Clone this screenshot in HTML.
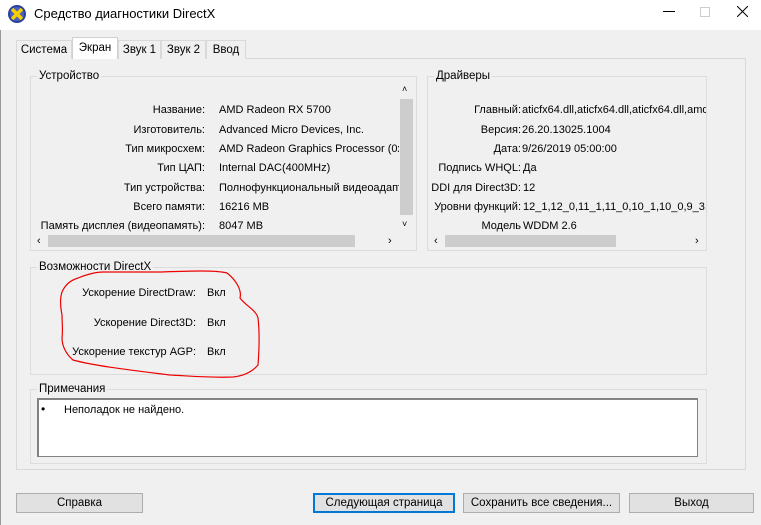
<!DOCTYPE html>
<html><head><meta charset="utf-8"><style>
*{box-sizing:border-box;margin:0;padding:0}
body{width:761px;height:525px;overflow:hidden;background:#f0f0f0;font-family:"Liberation Sans","DejaVu Sans",sans-serif;font-size:11px;color:#000;position:relative}
.a{position:absolute}
.title{left:0;top:0;width:761px;height:30px;background:#fff}
.tab{position:absolute;height:19px;border:1px solid #d9d9d9;border-bottom:none;background:#f0f0f0;text-align:center;line-height:18px;font-size:11.5px}
.panel{left:16px;top:58px;width:730px;height:412px;border:1px solid #d9d9d9;background:#f0f0f0}
.grp{position:absolute;border:1px solid #dcdcdc}
.lbl{position:absolute;background:#f0f0f0;padding:0 2px;top:-7px;left:6px;line-height:13px;font-size:11.5px}
.row{position:absolute;white-space:nowrap;line-height:14px}
.r{text-align:right}
.btn{position:absolute;top:493px;height:20px;border:1px solid #adadad;background:#e1e1e1;text-align:center;line-height:18px;font-size:11.5px}
</style></head><body>
<div class="a title"></div>
<div class="a" style="left:0;top:30px;width:1px;height:495px;background:#999"></div>
<svg class="a" style="left:7px;top:4px" width="20" height="20" viewBox="0 0 20 20"><circle cx="10" cy="10" r="9" fill="#2a3f9a"/><circle cx="10" cy="10" r="7" fill="#4a5fc0"/><path d="M5 5L15 15M15 5L5 15" stroke="#f5d000" stroke-width="3.5"/></svg>
<div class="a" style="left:34px;top:6px;font-size:13px;line-height:16px">Средство диагностики DirectX</div>
<div class="a" style="left:663px;top:11px;width:12px;height:1px;background:#000"></div>
<div class="a" style="left:700px;top:7px;width:10px;height:10px;border:1px solid #ccc"></div>
<svg class="a" style="left:737px;top:6px" width="11" height="11"><path d="M0 0L11 11M11 0L0 11" stroke="#000" stroke-width="1"/></svg>

<div class="a panel"></div>
<div class="tab" style="left:16px;top:40px;width:56px">Система</div>
<div class="tab" style="left:72px;top:37px;width:46px;height:22px;background:#fff;border-color:#d0d0d0;line-height:20px">Экран</div>
<div class="tab" style="left:118px;top:40px;width:43px">Звук 1</div>
<div class="tab" style="left:161px;top:40px;width:45px">Звук 2</div>
<div class="tab" style="left:206px;top:40px;width:40px">Ввод</div>

<div class="grp" style="left:30px;top:76px;width:387px;height:175px"><span class="lbl">Устройство</span></div>
<div class="a" style="left:33px;top:83px;width:366px;height:149px;overflow:hidden">
<div class="row r" style="left:0;width:172px;top:20px">Название:</div><div class="row" style="left:186px;top:20px">AMD Radeon RX 5700</div>
<div class="row r" style="left:0;width:172px;top:40px">Изготовитель:</div><div class="row" style="left:186px;top:40px">Advanced Micro Devices, Inc.</div>
<div class="row r" style="left:0;width:172px;top:59px">Тип микросхем:</div><div class="row" style="left:186px;top:59px">AMD Radeon Graphics Processor (0x731F)</div>
<div class="row r" style="left:0;width:172px;top:78px">Тип ЦАП:</div><div class="row" style="left:186px;top:78px">Internal DAC(400MHz)</div>
<div class="row r" style="left:0;width:172px;top:98px">Тип устройства:</div><div class="row" style="left:186px;top:98px">Полнофункциональный видеоадаптер</div>
<div class="row r" style="left:0;width:172px;top:117px">Всего памяти:</div><div class="row" style="left:186px;top:117px">16216 MB</div>
<div class="row r" style="left:0;width:172px;top:136px">Память дисплея (видеопамять):</div><div class="row" style="left:186px;top:136px">8047 MB</div>
</div>
<div class="a" style="left:399px;top:82px;width:17px;height:150px;background:#f0f0f0"></div>
<div class="a" style="left:400px;top:99px;width:13px;height:116px;background:#cdcdcd"></div>
<div class="a" style="left:402px;top:84px;font-size:9px">˄</div>
<div class="a" style="left:402px;top:219px;font-size:9px">˅</div>
<div class="a" style="left:33px;top:232px;width:366px;height:17px;background:#f0f0f0"></div>
<div class="a" style="left:48px;top:235px;width:307px;height:12px;background:#cdcdcd"></div>
<div class="a" style="left:37px;top:235px;font-size:11px">‹</div>
<div class="a" style="left:388px;top:235px;font-size:11px">›</div>

<div class="grp" style="left:427px;top:76px;width:280px;height:175px"><span class="lbl">Драйверы</span></div>
<div class="a" style="left:430px;top:101px;width:276px;height:131px;overflow:hidden">
<div class="row r" style="left:0;width:91px;top:2px">Главный:</div><div class="row" style="left:92px;top:2px">aticfx64.dll,aticfx64.dll,aticfx64.dll,amdxc64.dll</div>
<div class="row r" style="left:0;width:91px;top:22px">Версия:</div><div class="row" style="left:92px;top:22px">26.20.13025.1004</div>
<div class="row r" style="left:0;width:91px;top:41px">Дата:</div><div class="row" style="left:92px;top:41px">9/26/2019 05:00:00</div>
<div class="row r" style="left:0;width:91px;top:60px">Подпись WHQL:</div><div class="row" style="left:93px;top:60px">Да</div>
<div class="row r" style="left:-4px;width:95px;top:80px">DDI для Direct3D:</div><div class="row" style="left:93px;top:80px">12</div>
<div class="row r" style="left:-4px;width:95px;top:99px">Уровни функций:</div><div class="row" style="left:93px;top:99px">12_1,12_0,11_1,11_0,10_1,10_0,9_3,9_2</div>
<div class="row r" style="left:0;width:91px;top:118px">Модель</div><div class="row" style="left:93px;top:118px">WDDM 2.6</div>
</div>
<div class="a" style="left:430px;top:232px;width:276px;height:17px;background:#f0f0f0"></div>
<div class="a" style="left:445px;top:235px;width:171px;height:12px;background:#cdcdcd"></div>
<div class="a" style="left:434px;top:235px;font-size:11px">‹</div>
<div class="a" style="left:695px;top:235px;font-size:11px">›</div>

<div class="grp" style="left:30px;top:267px;width:677px;height:108px"><span class="lbl">Возможности DirectX</span></div>
<div class="row r" style="left:40px;width:156px;top:286px">Ускорение DirectDraw:</div><div class="row" style="left:207px;top:286px">Вкл</div>
<div class="row r" style="left:40px;width:156px;top:316px">Ускорение Direct3D:</div><div class="row" style="left:207px;top:316px">Вкл</div>
<div class="row r" style="left:40px;width:156px;top:345px">Ускорение текстур AGP:</div><div class="row" style="left:207px;top:345px">Вкл</div>
<svg class="a" style="left:0;top:0" width="761" height="525"><path d="M62 292 C66 283 72 280 78 278 C88 274 96 272 103 272 L160 272 C190 271 215 270 227 273 C236 280 242 290 240 298 C246 306 256 310 258 318 C260 335 259 352 258 365 C252 372 243 376 233 377 C210 378 190 376 170 375 C130 370 95 366 73 360 C66 354 62 346 62 338 C63 330 62 322 62 315 C60 305 60 298 62 292Z" fill="none" stroke="#e00" stroke-width="1.2"/></svg>

<div class="grp" style="left:30px;top:389px;width:677px;height:75px"><span class="lbl">Примечания</span></div>
<div class="a" style="left:37px;top:398px;width:661px;height:59px;background:#fff;border:1px solid #828282;border-top:2px solid #828282;border-left:2px solid #828282"></div>
<div class="a" style="left:41px;top:402px;font-size:12px">•</div>
<div class="a" style="left:64px;top:404px">Неполадок не найдено.</div>

<div class="btn" style="left:16px;width:127px">Справка</div>
<div class="btn" style="left:313px;width:142px;border:2px solid #0078d7;line-height:16px">Следующая страница</div>
<div class="btn" style="left:463px;width:157px">Сохранить все сведения...</div>
<div class="btn" style="left:629px;width:125px">Выход</div>
</body></html>
